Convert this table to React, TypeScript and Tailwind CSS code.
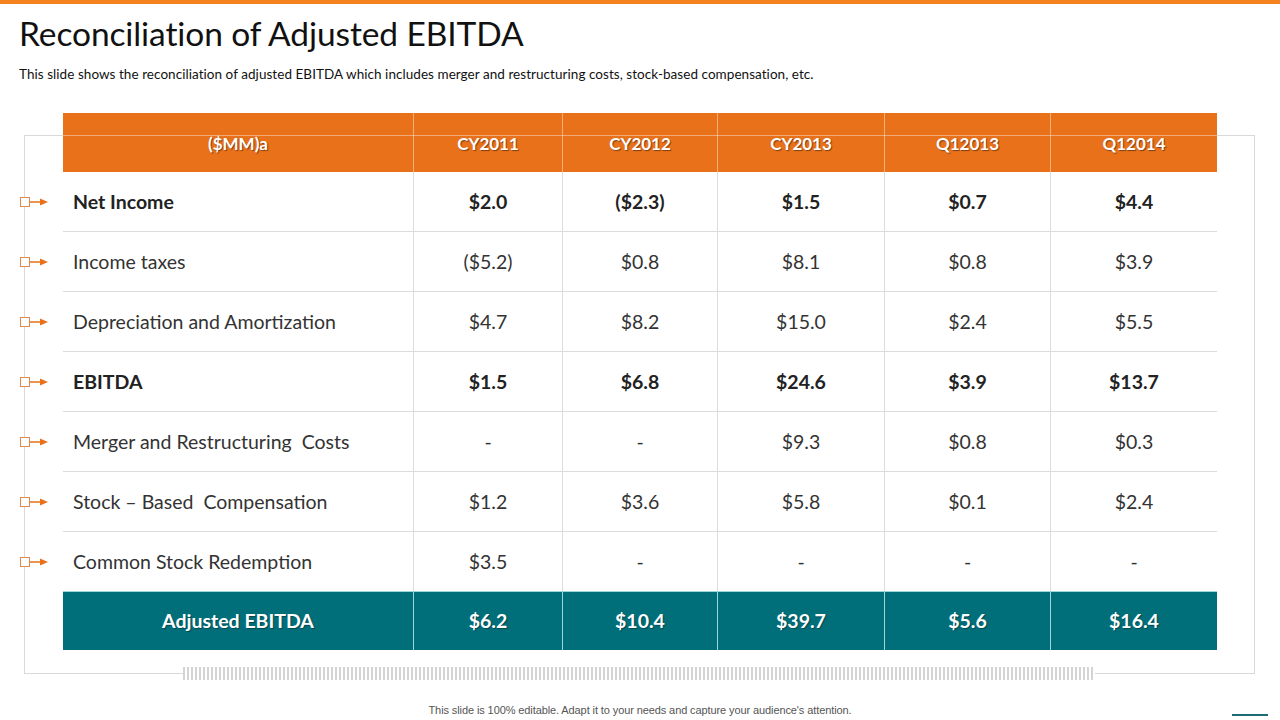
const cols = ["($MM)a", "CY2011", "CY2012", "CY2013", "Q12013", "Q12014"];

const rows = [
  { label: "Net Income", bold: true, vals: ["$2.0", "($2.3)", "$1.5", "$0.7", "$4.4"] },
  { label: "Income taxes", bold: false, vals: ["($5.2)", "$0.8", "$8.1", "$0.8", "$3.9"] },
  { label: "Depreciation and Amortization", bold: false, vals: ["$4.7", "$8.2", "$15.0", "$2.4", "$5.5"] },
  { label: "EBITDA", bold: true, vals: ["$1.5", "$6.8", "$24.6", "$3.9", "$13.7"] },
  { label: "Merger and Restructuring  Costs", bold: false, vals: ["-", "-", "$9.3", "$0.8", "$0.3"] },
  { label: "Stock – Based  Compensation", bold: false, vals: ["$1.2", "$3.6", "$5.8", "$0.1", "$2.4"] },
  { label: "Common Stock Redemption", bold: false, vals: ["$3.5", "-", "-", "-", "-"] },
];

const total = ["$6.2", "$10.4", "$39.7", "$5.6", "$16.4"];

const grid = "grid grid-cols-[350px_149px_155px_167px_166px_167px]";

function Marker() {
  return (
    <svg width="30" height="12" viewBox="0 0 30 12">
      <rect x="0.5" y="1.5" width="9" height="9" fill="white" stroke="#dd8a4e" strokeWidth="1" />
      <line x1="10" y1="6" x2="21" y2="6" stroke="#e8711a" strokeWidth="1.5" />
      <polygon points="20,2.5 28,6 20,9.5" fill="#e8711a" />
    </svg>
  );
}

export default function App() {
  return (
    <div className="relative w-[1280px] h-[720px] overflow-hidden bg-white font-['Lato',sans-serif] text-[#262626]">
      <div className="h-[4px] bg-[#f5821f]" />

      <h1 className="mt-[8px] pl-[19px] text-[33.5px] leading-[42px] text-[#111] tracking-[-0.1px]">
        Reconciliation of Adjusted EBITDA
      </h1>
      <p className="mt-[12px] pl-[19px] text-[13.5px] leading-[16px] text-[#111] tracking-[0.05px]">
        This slide shows the reconciliation of adjusted EBITDA which includes merger and restructuring costs, stock-based compensation, etc.
      </p>

      {/* decorative frame */}
      <div className="absolute left-[24px] top-[135px] w-[1231px] h-[539px] border border-[#d9d9d9]" />
      <div className="absolute left-[183px] top-[667px] w-[912px] h-[13px] bg-[repeating-linear-gradient(90deg,#d4d4d4_0_2px,#ffffff_2px_4px)]" />

      <div className="relative mt-[31px] pl-[20px]">
        {/* header */}
        <div className="flex">
          <div className="w-[43px]" />
          <div className={`${grid} relative h-[59px] bg-[#e8711a]`}>
            <div className="absolute left-0 right-0 top-[22px] h-px bg-white/40" />
            {cols.map((c, i) => (
              <div
                key={c}
                className={`flex items-center justify-center pt-[2px] text-[17px] font-bold text-white [text-shadow:1px_1px_1px_rgba(0,0,0,0.45)] ${i > 0 ? "border-l border-[#f4b07a]" : ""}`}
              >
                {c}
              </div>
            ))}
          </div>
        </div>

        {/* body */}
        {rows.map((r) => (
          <div key={r.label} className="flex">
            <div className="w-[43px] flex items-center">
              <Marker />
            </div>
            <div className={`${grid} h-[60px] border-b border-[#dcdcdc] text-[19.5px] ${r.bold ? "font-bold text-[#222]" : "text-[#333]"}`}>
              <div className="flex items-center pl-[10px] whitespace-pre">{r.label}</div>
              {r.vals.map((v, i) => (
                <div key={i} className="flex items-center justify-center border-l border-[#dcdcdc]">
                  {v}
                </div>
              ))}
            </div>
          </div>
        ))}

        {/* total */}
        <div className="flex">
          <div className="w-[43px]" />
          <div className={`${grid} h-[59px] -mt-px border-t border-[#9fd6da] bg-[#006f7a] text-white font-bold text-[19.5px] [text-shadow:1px_1px_1px_rgba(0,0,0,0.35)]`}>
            <div className="flex items-center justify-center">Adjusted  EBITDA</div>
            {total.map((v, i) => (
              <div key={i} className="flex items-center justify-center border-l border-[#9fd6da]">
                {v}
              </div>
            ))}
          </div>
        </div>
      </div>

      <p className="absolute left-0 right-0 top-[702px] text-center font-['Liberation_Sans',sans-serif] text-[11px] text-[#555] tracking-[-0.1px]">
        This slide is 100% editable.  Adapt it to your needs and capture your audience's attention.
      </p>
      <div className="absolute left-[1232px] top-[714px] w-[36px] h-[2px] bg-[#1d6b73]" />
    </div>
  );
}
